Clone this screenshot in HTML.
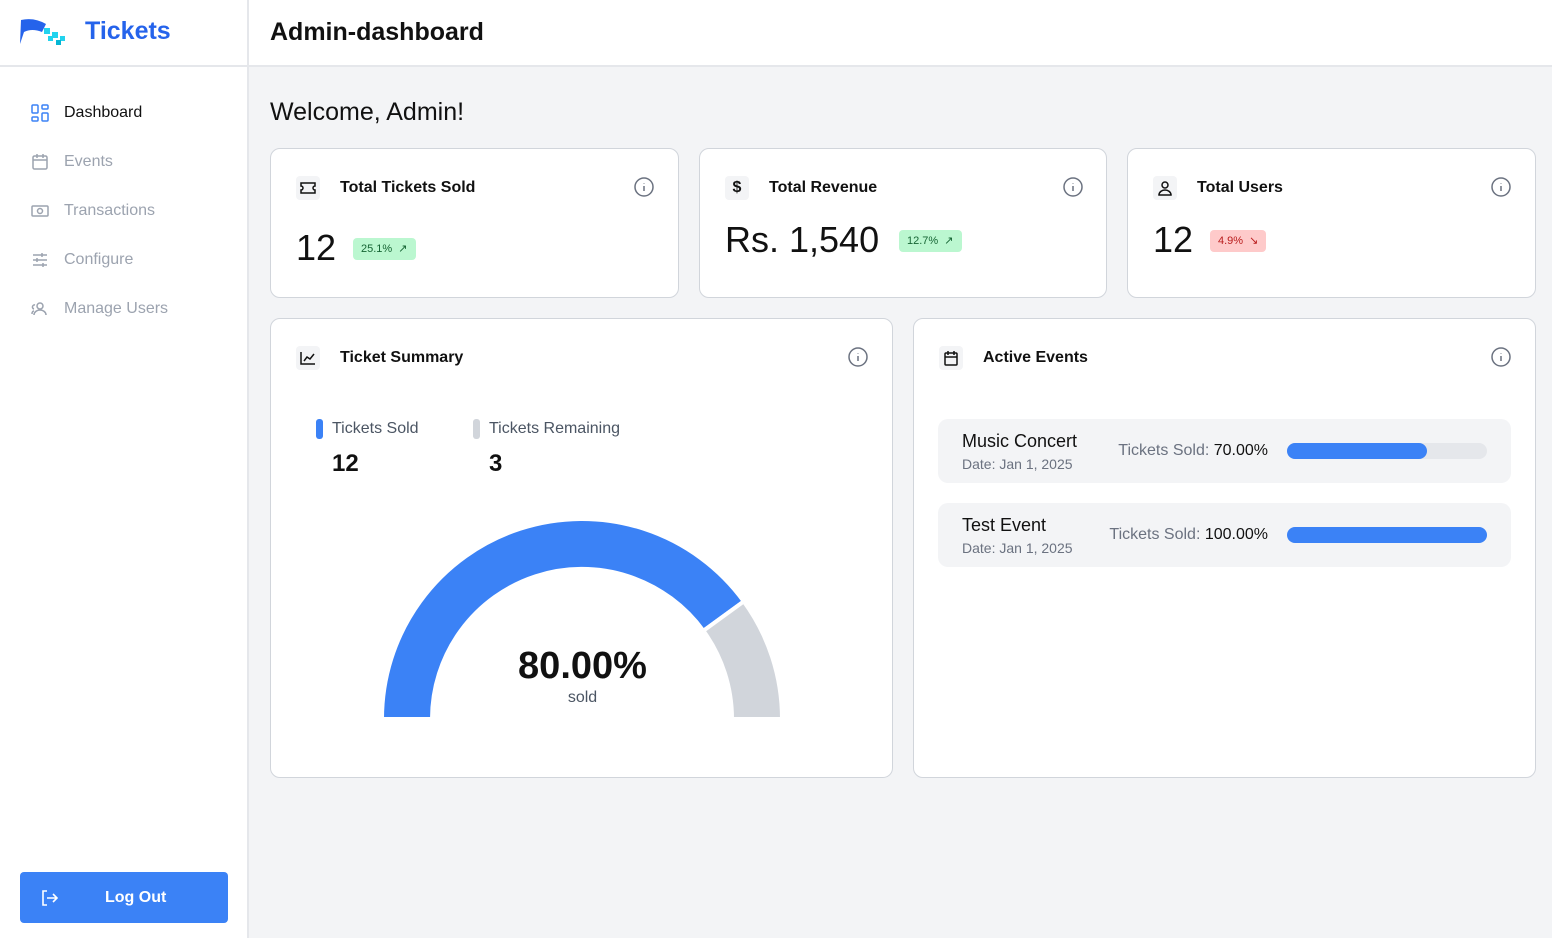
<!DOCTYPE html>
<html><head><style>
*{box-sizing:border-box;margin:0;padding:0}
body{width:1552px;height:938px;font-family:"Liberation Sans",sans-serif;background:#f3f4f6;position:relative;overflow:hidden;color:#111}
.side{position:absolute;left:0;top:0;width:249px;height:938px;background:#fff;border-right:2px solid #e5e7eb}
.top{position:absolute;left:249px;top:0;right:0;height:67px;background:#fff;border-bottom:2px solid #e5e7eb}
.logo{position:absolute;left:0;top:0;width:249px;height:67px;border-bottom:2px solid #e5e7eb}
.nav{position:absolute;left:31px;font-size:16px;color:#9ca3af;display:flex;align-items:center}
.nav svg{width:18px;height:18px;margin-right:15px}
.card{position:absolute;background:#fff;border:1px solid #d1d5db;border-radius:10px}
.ic{position:absolute;width:24px;height:24px;background:#f3f4f6;border-radius:4px;display:flex;align-items:center;justify-content:center}
.ttl{position:absolute;font-size:16px;font-weight:bold;color:#111}
.info{position:absolute;width:20px;height:20px}
.badge{position:absolute;font-size:11px;border-radius:4px;height:22px;line-height:22px;padding:0 8px}
.ev{position:absolute;left:24px;width:573px;height:64px;background:#f3f4f6;border-radius:10px}
</style></head><body>
<div class="side">
<div class="logo">
<svg style="position:absolute;left:20px;top:18px" width="48" height="28" viewBox="0 0 48 28"><path d="M1 2 Q14 -1 26 6 L22 14 Q12 10 4 14 L0 26 Z" fill="#2563eb"/><rect x="24" y="10" width="6" height="6" fill="#22d3ee"/><rect x="32" y="14" width="6" height="6" fill="#22d3ee"/><rect x="28" y="18" width="5" height="5" fill="#22d3ee"/><rect x="40" y="18" width="5" height="5" fill="#22d3ee"/><rect x="36" y="22" width="5" height="5" fill="#06b6d4"/></svg>
<div style="position:absolute;left:85px;top:17px;font-size:25px;font-weight:bold;color:#2563eb">Tickets</div>
</div>
<div class="nav" style="top:104px;color:#111"><svg viewBox="0 0 18 18" fill="none" stroke="#3b82f6" stroke-width="1.5"><rect x="1" y="1" width="6" height="8" rx="1"/><rect x="11" y="1" width="6" height="4" rx="1"/><rect x="1" y="13" width="6" height="4" rx="1"/><rect x="11" y="9" width="6" height="8" rx="1"/></svg>Dashboard</div>
<div class="nav" style="top:153px"><svg viewBox="0 0 18 18" fill="none" stroke="#9ca3af" stroke-width="1.5"><rect x="2" y="3" width="14" height="13" rx="1.5"/><path d="M2 7h14M6 1v4M12 1v4"/></svg>Events</div>
<div class="nav" style="top:202px"><svg viewBox="0 0 18 18" fill="none" stroke="#9ca3af" stroke-width="1.5"><rect x="1" y="4" width="16" height="10" rx="1"/><circle cx="9" cy="9" r="2.5"/></svg>Transactions</div>
<div class="nav" style="top:251px"><svg viewBox="0 0 18 18" fill="none" stroke="#9ca3af" stroke-width="1.5"><path d="M2 4h14M2 9h14M2 14h14M11 2v4M6 7v4M12 12v4"/></svg>Configure</div>
<div class="nav" style="top:300px"><svg viewBox="0 0 18 18" fill="none" stroke="#9ca3af" stroke-width="1.5"><circle cx="9" cy="6" r="3"/><path d="M3 15c0-3 3-5 6-5s6 2 6 5M4 5a2 2 0 0 0-1 4M1 14c0-2 1-3 2-3"/></svg>Manage Users</div>
<div style="position:absolute;left:20px;top:872px;width:208px;height:51px;background:#3b82f6;border-radius:4px;color:#fff;font-weight:bold;font-size:16px">
<svg style="position:absolute;left:20px;top:17px" width="18" height="18" viewBox="0 0 18 18" fill="none" stroke="#fff" stroke-width="1.6"><path d="M7 2H3v14h4M7 9h10M13 5l4 4-4 4"/></svg>
<span style="position:absolute;left:85px;top:17px">Log Out</span></div>
</div>
<div class="top"><div style="position:absolute;left:21px;top:18px;font-size:25px;font-weight:bold">Admin-dashboard</div></div>
<div style="position:absolute;left:270px;top:98px;font-size:25px">Welcome, Admin!</div>

<div class="card" style="left:270px;top:148px;width:409px;height:150px">
<div class="ic" style="left:25px;top:27px"><svg width="16" height="12" viewBox="0 0 16 12" fill="none" stroke="#111" stroke-width="1.5"><path d="M1 1h14v3a2 2 0 0 0 0 4v3H1V8a2 2 0 0 0 0-4z"/></svg></div>
<div class="ttl" style="left:69px;top:30px">Total Tickets Sold</div>
<svg class="info" style="left:363px;top:28px" viewBox="0 0 20 20" fill="none" stroke="#6b7280" stroke-width="1.5"><circle cx="10" cy="10" r="9"/><path d="M10 9v5M10 6v.5"/></svg>
<div style="position:absolute;left:25px;top:78px;font-size:36px">12</div>
<div class="badge" style="left:82px;top:89px;background:#bbf7d0;color:#166534">25.1% &nbsp;↗</div>
</div>
<div class="card" style="left:699px;top:148px;width:408px;height:150px">
<div class="ic" style="left:25px;top:27px;font-size:16px;font-weight:bold">$</div>
<div class="ttl" style="left:69px;top:30px">Total Revenue</div>
<svg class="info" style="left:363px;top:28px" viewBox="0 0 20 20" fill="none" stroke="#6b7280" stroke-width="1.5"><circle cx="10" cy="10" r="9"/><path d="M10 9v5M10 6v.5"/></svg>
<div style="position:absolute;left:25px;top:70px;font-size:36px">Rs. 1,540</div>
<div class="badge" style="left:199px;top:81px;background:#bbf7d0;color:#166534">12.7% &nbsp;↗</div>
</div>
<div class="card" style="left:1127px;top:148px;width:409px;height:150px">
<div class="ic" style="left:25px;top:27px"><svg width="16" height="16" viewBox="0 0 16 16" fill="none" stroke="#111" stroke-width="1.5"><circle cx="8" cy="5" r="3"/><path d="M2 15c0-3 3-5 6-5s6 2 6 5z"/></svg></div>
<div class="ttl" style="left:69px;top:30px">Total Users</div>
<svg class="info" style="left:363px;top:28px" viewBox="0 0 20 20" fill="none" stroke="#6b7280" stroke-width="1.5"><circle cx="10" cy="10" r="9"/><path d="M10 9v5M10 6v.5"/></svg>
<div style="position:absolute;left:25px;top:70px;font-size:36px">12</div>
<div class="badge" style="left:82px;top:81px;background:#fecaca;color:#b91c1c">4.9% &nbsp;↘</div>
</div>

<div class="card" style="left:270px;top:318px;width:623px;height:460px">
<div class="ic" style="left:25px;top:27px"><svg width="16" height="14" viewBox="0 0 16 14" fill="none" stroke="#111" stroke-width="1.5"><path d="M1 1v12h14M4 10l3-4 3 2 4-5"/></svg></div>
<div class="ttl" style="left:69px;top:30px">Ticket Summary</div>
<svg class="info" style="left:577px;top:28px" viewBox="0 0 20 20" fill="none" stroke="#6b7280" stroke-width="1.5"><circle cx="10" cy="10" r="9"/><path d="M10 9v5M10 6v.5"/></svg>
<div style="position:absolute;left:45px;top:100px;width:7px;height:20px;background:#3b82f6;border-radius:3px"></div>
<div style="position:absolute;left:61px;top:101px;font-size:16px;color:#4b5563">Tickets Sold</div>
<div style="position:absolute;left:61px;top:131px;font-size:24px;font-weight:bold">12</div>
<div style="position:absolute;left:202px;top:100px;width:7px;height:20px;background:#d1d5db;border-radius:3px"></div>
<div style="position:absolute;left:218px;top:101px;font-size:16px;color:#4b5563">Tickets Remaining</div>
<div style="position:absolute;left:218px;top:131px;font-size:24px;font-weight:bold">3</div>
<svg style="position:absolute;left:111px;top:200px" width="400" height="200" viewBox="0 0 400 200">
<path d="M0 200 A200 200 0 0 1 361.8 82.4 L321.4 111.8 A150 150 0 0 0 50 200 Z" fill="#3b82f6" stroke="#fff" stroke-width="4"/>
<path d="M361.8 82.4 A200 200 0 0 1 400 200 L350 200 A150 150 0 0 0 321.4 111.8 Z" fill="#d1d5db" stroke="#fff" stroke-width="4"/>
</svg>
<div style="position:absolute;left:0;width:623px;text-align:center;top:326px;font-size:38px;font-weight:bold">80.00%</div>
<div style="position:absolute;left:0;width:623px;text-align:center;top:370px;font-size:16px;color:#4b5563">sold</div>
</div>

<div class="card" style="left:913px;top:318px;width:623px;height:460px">
<div class="ic" style="left:25px;top:27px"><svg width="16" height="16" viewBox="0 0 16 16" fill="none" stroke="#111" stroke-width="1.5"><rect x="2" y="3" width="12" height="12" rx="1"/><path d="M2 7h12M5 1v4M11 1v4"/></svg></div>
<div class="ttl" style="left:69px;top:30px">Active Events</div>
<svg class="info" style="left:577px;top:28px" viewBox="0 0 20 20" fill="none" stroke="#6b7280" stroke-width="1.5"><circle cx="10" cy="10" r="9"/><path d="M10 9v5M10 6v.5"/></svg>
<div class="ev" style="top:100px">
<div style="position:absolute;left:24px;top:12px;font-size:18px">Music Concert</div>
<div style="position:absolute;left:24px;top:37px;font-size:14px;color:#6b7280">Date: Jan 1, 2025</div>
<div style="position:absolute;right:243px;top:23px;font-size:16px;color:#6b7280">Tickets Sold: <span style="color:#111">70.00%</span></div>
<div style="position:absolute;left:349px;top:24px;width:200px;height:16px;background:#e5e7eb;border-radius:8px"><div style="width:140px;height:16px;background:#3b82f6;border-radius:8px"></div></div>
</div>
<div class="ev" style="top:184px">
<div style="position:absolute;left:24px;top:12px;font-size:18px">Test Event</div>
<div style="position:absolute;left:24px;top:37px;font-size:14px;color:#6b7280">Date: Jan 1, 2025</div>
<div style="position:absolute;right:243px;top:23px;font-size:16px;color:#6b7280">Tickets Sold: <span style="color:#111">100.00%</span></div>
<div style="position:absolute;left:349px;top:24px;width:200px;height:16px;background:#3b82f6;border-radius:8px"></div>
</div>
</div>
</body></html>
